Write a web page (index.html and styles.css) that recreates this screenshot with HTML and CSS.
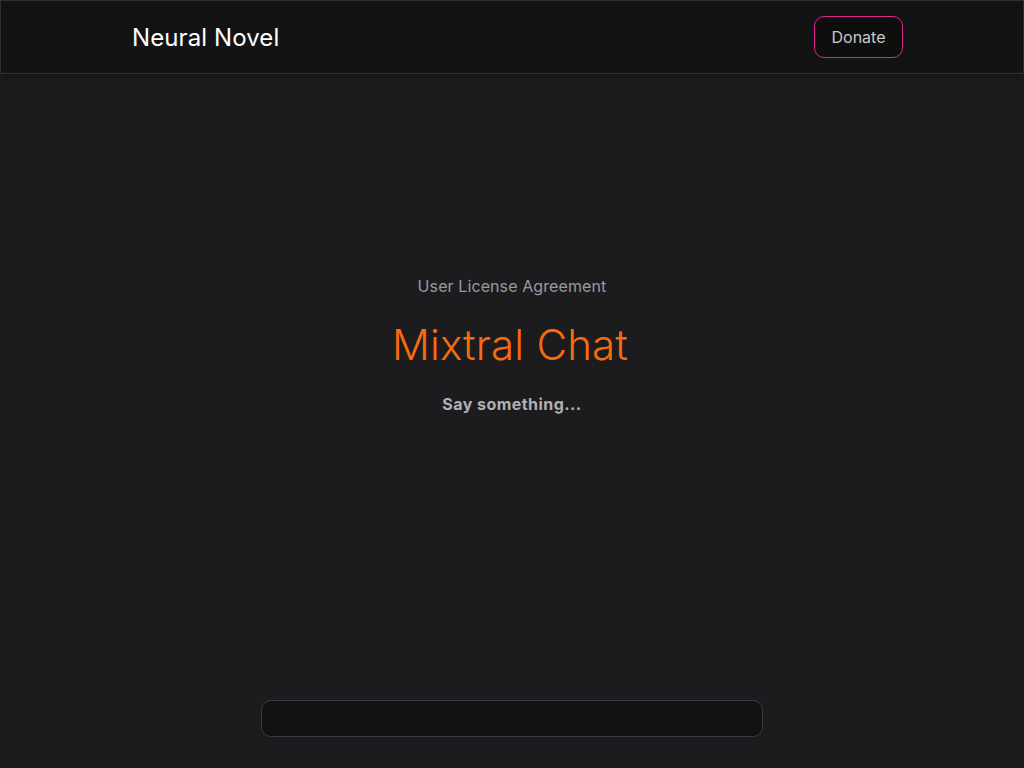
FILE: index.html
```html
<!DOCTYPE html>
<html>
<head>
<meta charset="utf-8">
<link rel="stylesheet" href="styles.css">
</head>
<body>
<header class="topbar">
  <div class="brand">Neural Novel</div>
  <button class="donate">Donate</button>
</header>
<main class="main">
  <div class="hero">
    <div class="license">User License Agreement</div>
    <h1 class="title">Mixtral Chat</h1>
    <div class="prompt">Say something...</div>
  </div>
  <div class="composer">
    <div class="input"></div>
  </div>
</main>
</body>
</html>
```
FILE: styles.css
```css
* { box-sizing: border-box; }
html, body { margin: 0; height: 100%; }
body {
  background: #1c1c1e;
  font-family: Inter, "Noto Sans", sans-serif;
  display: flex;
  flex-direction: column;
  height: 768px;
  overflow: hidden;
}
.topbar {
  height: 74px;
  flex: none;
  background: #131314;
  border: 1px solid #303032;
  display: flex;
  align-items: center;
  justify-content: space-between;
  padding: 0 120px 0 131px;
  box-shadow: 0 2px 10px rgba(0,0,0,0.35);
}
.brand {
  color: #ffffff;
  font-size: 24px;
  font-weight: 400;
  letter-spacing: 0.1px;
}
.donate {
  height: 42px;
  width: 89px;
  background: #0e0e0f;
  border: 1px solid #d9268f;
  border-radius: 10px;
  color: #c8c8c8;
  font-family: Inter, sans-serif;
  font-size: 16px;
  padding: 0;
}
.main {
  flex: 1;
  display: flex;
  flex-direction: column;
  align-items: center;
}
.hero {
  flex: 1;
  display: flex;
  flex-direction: column;
  align-items: center;
  padding-top: 200px;
}
.license {
  color: #9a9a9e;
  font-size: 16px;
  line-height: 24px;
  letter-spacing: 0.1px;
}
.title {
  margin: 21px 0 0;
  padding-right: 4px;
  color: #f86b0c;
  font-size: 42px;
  font-weight: 300;
  line-height: 52px;
  letter-spacing: 0.2px;
}
.prompt {
  margin-top: 21px;
  color: #b0b0b3;
  font-size: 16px;
  font-weight: 700;
  line-height: 24px;
  letter-spacing: 0.45px;
}
.composer {
  padding-bottom: 31px;
}
.input {
  width: 502px;
  height: 37px;
  background: #121213;
  border: 1px solid #3a3a48;
  border-radius: 10px;
}
```
